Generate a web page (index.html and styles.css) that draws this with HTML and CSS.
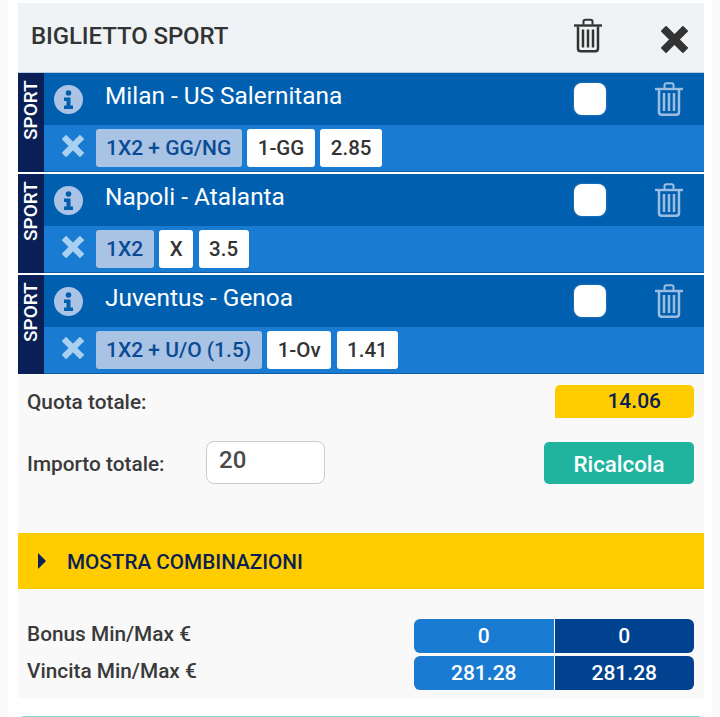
FILE: index.html
```html
<!DOCTYPE html>
<html lang="it">
<head>
    <meta charset="UTF-8">
    <meta name="viewport" content="width=device-width, initial-scale=1.0">
    <title>Biglietto Sport</title>
    <link rel="stylesheet" href="styles.css">
</head>
<body>
    <svg class="icon-defs" width="0" height="0">
        <symbol id="trash" viewBox="0 0 28 34">
            <path d="M0 7h28" fill="none" stroke="currentColor" stroke-width="2.400"/>
            <path d="M9.500 6V3Q9.500 1.200 11.500 1.200h5Q18.500 1.200 18.500 3V6" fill="none" stroke="currentColor" stroke-width="2"/>
            <path d="M4 8V30Q4 32.700 6.700 32.700h14.600Q24 32.700 24 30V8" fill="none" stroke="currentColor" stroke-width="2.500"/>
            <path d="M9 11V29M14 11V29M19 11V29" fill="none" stroke="currentColor" stroke-width="2.500"/>
        </symbol>
        <symbol id="cross" viewBox="0 0 24 24">
            <path d="M4.500 4.500L19.500 19.500M19.500 4.500L4.500 19.500" fill="none" stroke="currentColor" stroke-width="6.800" stroke-linecap="square" stroke-linejoin="round"/>
        </symbol>
        <symbol id="info" viewBox="0 0 29 29">
            <circle cx="14.500" cy="14.500" r="14.500" fill="currentColor"/>
            <circle cx="14.500" cy="8" r="2.800" fill="#0060af"/>
            <path d="M10 12.500h6.500v8h2.500v3.500h-9v-3.500h2.500v-4.500h-2.500z" fill="#0060af"/>
        </symbol>
    </svg>

    <div class="page">
        <div class="ticket">
            <div class="ticket-header">
                <h1>BIGLIETTO SPORT</h1>
                <svg class="trash-all"><use href="#trash"/></svg>
                <svg class="close"><use href="#cross"/></svg>
            </div>

            <div class="bet">
                <div class="bet-type"><span>SPORT</span></div>
                <div class="bet-body">
                    <div class="bet-top">
                        <svg class="info"><use href="#info"/></svg>
                        <span class="match">Milan - US Salernitana</span>
                        <span class="check"></span>
                        <svg class="trash"><use href="#trash"/></svg>
                    </div>
                    <div class="bet-bottom">
                        <svg class="remove"><use href="#cross"/></svg>
                        <span class="market">1X2 + GG/NG</span>
                        <span class="pick">1-GG</span>
                        <span class="pick">2.85</span>
                    </div>
                </div>
            </div>

            <div class="bet">
                <div class="bet-type"><span>SPORT</span></div>
                <div class="bet-body">
                    <div class="bet-top">
                        <svg class="info"><use href="#info"/></svg>
                        <span class="match">Napoli - Atalanta</span>
                        <span class="check"></span>
                        <svg class="trash"><use href="#trash"/></svg>
                    </div>
                    <div class="bet-bottom">
                        <svg class="remove"><use href="#cross"/></svg>
                        <span class="market">1X2</span>
                        <span class="pick">X</span>
                        <span class="pick">3.5</span>
                    </div>
                </div>
            </div>

            <div class="bet last">
                <div class="bet-type"><span>SPORT</span></div>
                <div class="bet-body">
                    <div class="bet-top">
                        <svg class="info"><use href="#info"/></svg>
                        <span class="match">Juventus - Genoa</span>
                        <span class="check"></span>
                        <svg class="trash"><use href="#trash"/></svg>
                    </div>
                    <div class="bet-bottom">
                        <svg class="remove"><use href="#cross"/></svg>
                        <span class="market">1X2 + U/O (1.5)</span>
                        <span class="pick">1-Ov</span>
                        <span class="pick">1.41</span>
                    </div>
                </div>
            </div>

            <div class="totals">
                <div class="total-row">
                    <span class="label">Quota totale:</span>
                    <span class="odds">14.06</span>
                </div>
                <div class="amount-row">
                    <span class="label amount-label">Importo totale:</span>
                    <input class="amount" type="text" value="20">
                    <button class="recalc" type="button">Ricalcola</button>
                </div>
            </div>

            <div class="combos">
                <span class="arrow"></span>
                <span>MOSTRA COMBINAZIONI</span>
            </div>

            <div class="wins">
                <div class="win-row">
                    <span class="label">Bonus Min/Max €</span>
                    <div class="win-values"><span class="min">0</span><span class="max">0</span></div>
                </div>
                <div class="win-row">
                    <span class="label">Vincita Min/Max €</span>
                    <div class="win-values"><span class="min">281.28</span><span class="max">281.28</span></div>
                </div>
            </div>
        </div>
        <div class="next-panel"></div>
    </div>
</body>
</html>
```

FILE: styles.css
```css
html, body {
    height: 717px;
    overflow: hidden;
}
body {
    margin: 0;
    padding: 0 8px;
    background-color: #fafafa;
    font-family: Roboto, 'Liberation Sans', sans-serif;
    color: #333;
}
.icon-defs {
    position: absolute;
}
.page {
    height: 717px;
    padding: 3px 8px 0 10px;
    box-sizing: border-box;
    background-color: #fff;
}
.ticket-header {
    display: flex;
    align-items: center;
    height: 70px;
    padding-left: 13px;
    background-color: #f0f3f6;
    box-sizing: border-box;
    border-bottom: 1px solid #b9cde0;
}
h1 {
    margin: 0 auto 4px 0;
    font-size: 24px;
    font-weight: 500;
    letter-spacing: -0.1px;
    color: #333;
}
.trash-all {
    width: 28px;
    height: 35px;
    color: #333;
    margin: 0 59px 5px 0;
}
.close {
    width: 27px;
    height: 27px;
    color: #333;
    margin: 4px 16px 0 0;
}
.bet {
    display: flex;
    height: 99px;
    margin-bottom: 2px;
}
.bet.last {
    margin-bottom: 0;
}
.bet-type {
    width: 26px;
    display: flex;
    justify-content: center;
    background-color: #0a1f55;
}
.bet-type span {
    writing-mode: vertical-rl;
    transform: rotate(180deg);
    height: 60px;
    margin-top: 7px;
    text-align: left;
    color: #fff;
    font-size: 19px;
    font-weight: 500;
    line-height: 26px;
}
.bet-body {
    flex: 1;
    display: flex;
    flex-direction: column;
}
.bet-top {
    display: flex;
    align-items: center;
    height: 52px;
    background-color: #0060af;
    color: #fff;
}
.info {
    width: 29px;
    height: 29px;
    margin: 0 22px 0 10px;
    color: #abc4e5;
    flex: none;
}
.match {
    font-size: 24.400px;
    margin: -8px auto 0 0;
}
.check {
    width: 32px;
    height: 32px;
    border-radius: 8px;
    background-color: #fff;
    margin: 0 49px 0 0;
    box-shadow: 0 0 2px #6d92c4;
}
.trash {
    width: 28px;
    height: 34px;
    color: #9dbce2;
    margin-right: 21px;
}
.bet-bottom {
    flex: 1;
    display: flex;
    align-items: center;
    gap: 5.500px;
    padding-left: 18px;
    background-color: #1a7bd2;
    border-bottom: 1px solid #0f5da5;
}
.remove {
    width: 22px;
    height: 22px;
    margin: -4px 6px 0 0;
    color: #a8d0f0;
    flex: none;
}
.market, .pick {
    height: 38px;
    line-height: 38px;
    border-radius: 3px;
    font-size: 20.500px;
    font-weight: 500;
}
.market {
    padding: 0 10.500px;
    font-size: 21px;
    background-color: #a8c3e3;
    color: #0a4a95;
}
.pick {
    padding: 0 10.500px;
    background-color: #fff;
    color: #333;
}
.totals {
    height: 159px;
    padding: 11px 10px 0 9px;
    box-sizing: border-box;
    background-color: #f9f9f9;
}
.label {
    font-size: 20.800px;
    font-weight: 500;
    color: #3a3a3a;
}
.total-row {
    display: flex;
    align-items: center;
    justify-content: space-between;
}
.odds {
    width: 139px;
    height: 33px;
    padding-right: 33px;
    box-sizing: border-box;
    line-height: 33px;
    text-align: right;
    border-radius: 5px 5px 5px 0;
    background-color: #fc0;
    color: #0a1f55;
    font-size: 21px;
    font-weight: 500;
}
.amount-row {
    display: flex;
    align-items: center;
    margin-top: 23px;
}
.amount-label {
    width: 179px;
    margin-top: 3px;
}
.amount {
    width: 119px;
    height: 43px;
    padding: 0 12px 5px;
    box-sizing: border-box;
    border: 1px solid #ccc;
    border-radius: 8px;
    background-color: #fff;
    font-family: inherit;
    font-size: 24px;
    font-weight: 500;
    color: #4a4a4a;
}
.recalc {
    width: 150px;
    height: 42px;
    margin-left: auto;
    padding-top: 3px;
    border: none;
    border-radius: 5px;
    background-color: #20b49f;
    color: #fff;
    font-family: inherit;
    font-size: 22.300px;
    font-weight: 500;
}
.combos {
    display: flex;
    align-items: center;
    gap: 21px;
    height: 56px;
    padding-left: 20px;
    background-color: #fc0;
    color: #0a1f55;
    font-size: 20.700px;
    font-weight: 500;
}
.combos span:last-child {
    margin-top: 2px;
}
.arrow {
    width: 0;
    height: 0;
    border-left: 8px solid #0a1f55;
    border-top: 8px solid transparent;
    border-bottom: 8px solid transparent;
}
.wins {
    height: 109px;
    padding: 30px 10px 0 9px;
    box-sizing: border-box;
    background-color: #f9f9f9;
}
.win-row {
    display: flex;
    align-items: center;
    justify-content: space-between;
    margin-bottom: 3px;
}
.win-row .label {
    margin-top: -4px;
}
.win-values {
    display: flex;
    gap: 1px;
    width: 280px;
}
.win-values span {
    flex: 1;
    height: 34px;
    line-height: 34px;
    text-align: center;
    color: #fff;
    font-size: 21px;
    font-weight: 500;
}
.min {
    background-color: #1a7bd2;
    border-radius: 6px 0 0 6px;
}
.max {
    background-color: #004290;
    border-radius: 0 6px 6px 0;
}
.next-panel {
    height: 20px;
    margin: 18px 2px 0;
    border-top: 1px solid #7fd8c8;
    border-radius: 4px 4px 0 0;
}
```
